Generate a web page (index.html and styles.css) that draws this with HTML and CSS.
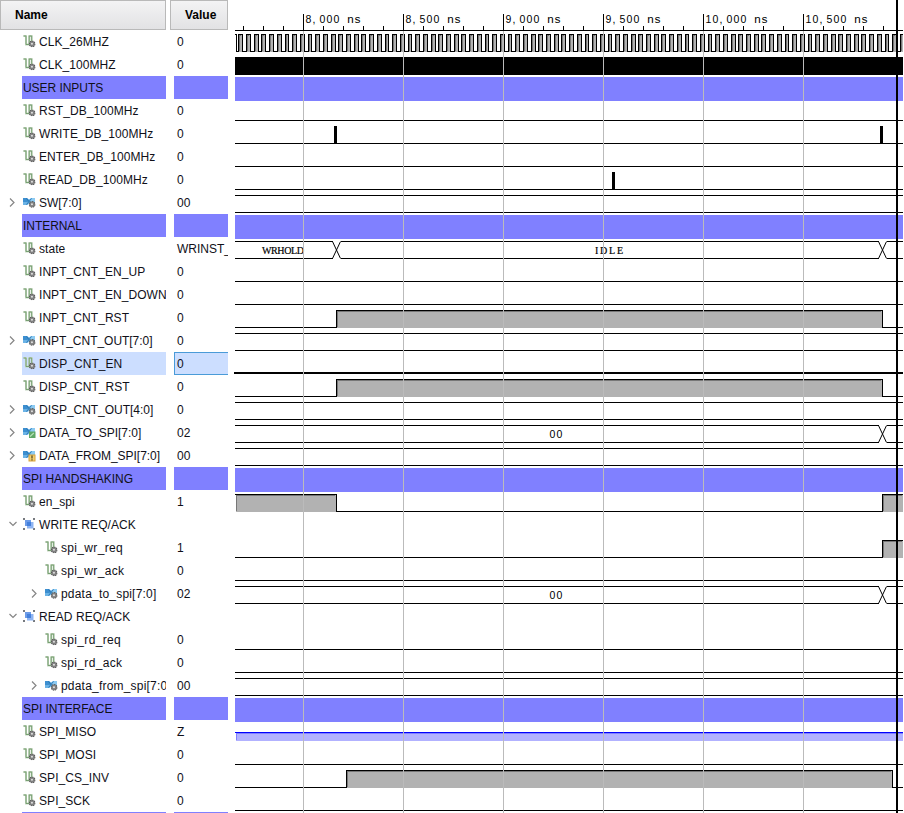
FILE: index.html
```html
<!DOCTYPE html>
<html lang="en">
<head>
<meta charset="utf-8">
<title>Waveform</title>
<link rel="stylesheet" href="styles.css">
</head>
<body>
<svg class="defs" aria-hidden="true">
  <symbol id="i-gear" viewBox="0 0 6 6">
    <circle cx="3" cy="3" r="2.5" fill="#8a8a8a" stroke="#5a5a5a" stroke-width="1" stroke-dasharray="1.200 .7"/>
    <circle cx="3" cy="3" r="2" fill="#808080"/>
    <circle cx="2.8" cy="2.8" r=".9" fill="#e0e0e0"/>
  </symbol>
  <symbol id="i-signal" viewBox="0 0 13 13">
    <path d="M0.500 1H3V9.500H6.200V1H8.700V7" fill="none" stroke="#c3d5bf" stroke-width="1.900"/>
    <path d="M0.500 1H3V9.500H6.200V1H8.700V7" fill="none" stroke="#6f9b6a" stroke-width=".9"/>
    <use href="#i-gear" x="5.800" y="5.500" width="6.800" height="6.800"/>
  </symbol>
  <symbol id="i-wires" viewBox="0 0 13 13">
    <path d="M0 2H4L6 3.500L8 2H12V9H7.500L6 7.800L4.500 9H0Z" fill="#6bb3e6"/>
    <path d="M0 2H4L6 4.500L4.500 6H0Z" fill="#3d8fd0"/>
    <path d="M12 2H9L6.500 4.500L8 6H12Z" fill="#8ccaf2"/>
    <path d="M3.500 2.500L8.500 8.500M3.500 8.500L8.500 2.500" fill="none" stroke="#2672ae" stroke-width=".9"/>
  </symbol>
  <symbol id="i-bus" viewBox="0 0 13 13">
    <use href="#i-wires" width="13" height="13"/>
    <use href="#i-gear" x="5.800" y="5" width="6.800" height="6.800"/>
  </symbol>
  <symbol id="i-out" viewBox="0 0 13 13">
    <use href="#i-wires" width="13" height="13"/>
    <path d="M6 5.500H12.500V12H6Z" fill="#5fa866"/>
    <path d="M7 10.500L10.800 7" stroke="#b6e2b9" stroke-width="1.200"/>
  </symbol>
  <symbol id="i-in" viewBox="0 0 13 13">
    <use href="#i-wires" width="13" height="13"/>
    <path d="M5.500 5.500H12.500V12.500H5.500Z" fill="#d9a33c"/>
    <path d="M6.500 6.500H11.500V11.500H6.500Z" fill="#f0cf72"/>
    <path d="M9 6.500V9.500M9 10.200V11.400" stroke="#5c4a20" stroke-width="1.300"/>
  </symbol>
  <symbol id="i-group" viewBox="0 0 13 13">
    <path d="M0 0H2V2H0ZM10 0H12V2H10ZM0 10H2V12H0ZM10 10H12V12H10Z" fill="#777a7f"/>
    <path d="M2 2H8V8H2Z" fill="#6d9ce8"/>
    <path d="M4 4H10.500V10.500H4Z" fill="#8fb4f2"/>
    <path d="M4 4H8V8H4Z" fill="#4480dc"/>
  </symbol>
</svg>
<main class="viewer">
  <section class="names">
    <header class="head head-name">Name</header>
    <div id="names"></div>
  </section>
  <section class="values">
    <header class="head head-value">Value</header>
    <div id="values"></div>
  </section>
  <section class="waves">
    <svg id="ruler" class="ruler" width="669" height="31"></svg>
    <div id="waves"></div>
    <svg id="overlay" class="overlay" width="669" height="813"></svg>
  </section>
</main>
<script src="app.js"></script>
</body>
</html>
```
FILE: styles.css
```css
* { box-sizing: border-box; }
body {
  margin: 0;
  background: #fff;
  color: #101018;
  font: 12px "Liberation Sans", Arial, sans-serif;
  overflow: hidden;
}
.defs { position: absolute; width: 0; height: 0; }
.viewer { display: flex; width: 904px; height: 813px; overflow: hidden; }
.names { width: 166px; margin-right: 4px; flex: none; }
.values { width: 58px; margin-right: 6px; flex: none; }
.waves { width: 669px; position: relative; flex: none; }
.head {
  height: 30px;
  border: 1px solid #b9b9b9;
  background: linear-gradient(#f3f3f4, #e2e2e4);
  font-weight: bold;
  line-height: 29px;
  color: #000;
}
.head-name { padding-left: 14px; }
.head-value { padding-left: 14px; }
.row { display: flex; align-items: center; height: 23px; white-space: nowrap; overflow: hidden; }
.row .arrow { width: 22px; height: 23px; flex: none; }
.row.nested .arrow { width: 44px; padding-left: 22px; }
.row .arrow svg { display: block; width: 22px; height: 23px; }
.label {
  display: flex;
  align-items: center;
  flex: 1;
  min-width: 0;
  height: 23px;
  padding-left: 1px;
  overflow: hidden;
}
.icon { width: 13px; height: 13px; margin-right: 3px; flex: none; }
.text { line-height: 23px; padding-top: 1px; letter-spacing: .06px; }
.group .text { letter-spacing: -.05px; }
.bus .text { letter-spacing: -.03px; }
.nested .text { letter-spacing: .33px; }
.nested.bus .text { letter-spacing: .2px; }
.group .label, .group .value { background: #8080ff; }
.value { height: 23px; flex: 1; margin-left: 4px; padding-left: 3px; line-height: 24px; overflow: hidden; }
.selected .label { background: #ccdeff; }
.selected .value {
  background: #ccdeff;
  border: 1px solid #4a9bd8;
  border-right: 0;
  padding-left: 2px;
  line-height: 22px;
}
.ruler { display: block; }
.wave { display: block; width: 669px; height: 23px; overflow: visible; }
.overlay { position: absolute; left: 0; top: 0; }
.digits { font-family: "Liberation Sans", sans-serif; font-size: 10.5px; fill: #000; }
.unit { font-family: "Liberation Mono", monospace; font-size: 11.67px; fill: #000; }
.state { font-family: "Liberation Serif", serif; font-size: 10px; fill: #000; stroke: #000; stroke-width: .2px; }
```
FILE: app.js
```js
// Horizontal positions are window x coordinates; the wave pane begins at x = 234.
const X0 = 234, END = 903;
const rows = [
  { n: 'CLK_26MHZ', v: '0', w: ['clock'] },
  { n: 'CLK_100MHZ', v: '0', w: ['solid'] },
  { n: 'USER INPUTS', g: 1 },
  { n: 'RST_DB_100MHz', v: '0', w: ['bit'] },
  { n: 'WRITE_DB_100MHz', v: '0', w: ['bit'], pulses: [334, 880] },
  { n: 'ENTER_DB_100MHz', v: '0', w: ['bit'] },
  { n: 'READ_DB_100MHz', v: '0', w: ['bit'], pulses: [612] },
  { n: 'SW[7:0]', v: '00', i: 'bus', w: ['bus'] },
  { n: 'INTERNAL', g: 1 },
  { n: 'state', v: 'WRINST_', w: ['bus', 336, 882], t: [[262, 'WRHOLD'], [595, 'IDLE']] },
  { n: 'INPT_CNT_EN_UP', v: '0', w: ['bit'] },
  { n: 'INPT_CNT_EN_DOWN', v: '0', w: ['bit'] },
  { n: 'INPT_CNT_RST', v: '0', w: ['bit', [336, 882]] },
  { n: 'INPT_CNT_OUT[7:0]', v: '0', i: 'bus', w: ['bus'] },
  { n: 'DISP_CNT_EN', v: '0', sel: 1, w: ['thick'] },
  { n: 'DISP_CNT_RST', v: '0', w: ['bit', [336, 882]] },
  { n: 'DISP_CNT_OUT[4:0]', v: '0', i: 'bus', w: ['bus'] },
  { n: 'DATA_TO_SPI[7:0]', v: '02', i: 'out', w: ['bus', 882], t: [[549, '00']] },
  { n: 'DATA_FROM_SPI[7:0]', v: '00', i: 'in', w: ['bus'] },
  { n: 'SPI HANDSHAKING', g: 1 },
  { n: 'en_spi', v: '1', w: ['bit', [235, 336], [882, END]] },
  { n: 'WRITE REQ/ACK', i: 'group', open: 1 },
  { n: 'spi_wr_req', v: '1', d: 1, w: ['bit', [882, END]] },
  { n: 'spi_wr_ack', v: '0', d: 1, w: ['bit'] },
  { n: 'pdata_to_spi[7:0]', v: '02', d: 1, i: 'bus', w: ['bus', 882], t: [[549, '00']] },
  { n: 'READ REQ/ACK', i: 'group', open: 1 },
  { n: 'spi_rd_req', v: '0', d: 1, w: ['bit'] },
  { n: 'spi_rd_ack', v: '0', d: 1, w: ['bit'] },
  { n: 'pdata_from_spi[7:0]', v: '00', d: 1, i: 'bus', w: ['bus'] },
  { n: 'SPI INTERFACE', g: 1 },
  { n: 'SPI_MISO', v: 'Z', w: ['float'] },
  { n: 'SPI_MOSI', v: '0', w: ['bit'] },
  { n: 'SPI_CS_INV', v: '0', w: ['bit', [346, 892]] },
  { n: 'SPI_SCK', v: '0', w: ['bit'] },
  { n: '', g: 1, last: 1 }
];

const rect = (x, y, w, h, c) =>
  w > 0 ? `<rect x="${x - X0}" y="${y}" width="${w}" height="${h}" fill="${c}"/>` : '';

// Text on a fixed pitch of 7px per character.
const pitched = (x, y, t, c) =>
  `<text class="${c}" x="${[...t].map((_, k) => x - X0 + k * 7).join(' ')}" y="${y}">${t}</text>`;

// High level between two edges: outline, inner shadow and fill.
function high(a, b) {
  const left = a === 235 ? 236 : a + 1;
  let s = rect(left, 4, b - left, 17, '#b2b2b2') + rect(left, 4, b - left - 1, 1, '#777') +
    rect(left, 4, 1, 16, '#777') + rect(a, 3, b - a + (b < END ? 1 : 0), 1, '#000');
  if (a !== 235) s += rect(a, 3, 1, 18, '#000');
  if (b < END) s += rect(b, 3, 1, 18, '#000');
  return s;
}

function bit(spans) {
  let s = '', x = 235;
  for (const [a, b] of spans) {
    s += rect(x, 20, a - x, 1, '#000') + high(a, b);
    x = b;
  }
  return s + rect(x, 20, END - x, 1, '#000');
}

function bus(changes) {
  let s = '', x = 235;
  for (const c of changes) {
    s += rect(x, 3, c - 3 - x, 1, '#000') + rect(x, 20, c - 3 - x, 1, '#000');
    const m = c - X0;
    s += `<path d="M${m - 3.5} 3.5L${m + 4.5} 20.5M${m + 4.5} 3.5L${m - 3.5} 20.5" stroke="#000"/>`;
    x = c + 5;
  }
  return s + rect(x, 3, END - x, 1, '#000') + rect(x, 20, END - x, 1, '#000');
}

function clock() {
  let s = rect(235, 3, 2, 1, '#000') + rect(236, 3, 1, 18, '#000') + rect(236, 20, 3, 1, '#000');
  const period = 100 / 13;
  for (let k = 0; k < 87; k++) {
    const a = Math.floor(238.9 + k * period);
    const b = Math.min(Math.floor(238.9 + (k + .5) * period), END);
    const next = Math.min(Math.floor(238.9 + (k + 1) * period), END);
    s += high(a, b) + rect(b, 20, next - b, 1, '#000');
  }
  return s;
}

function wave(r) {
  let s = '';
  if (r.last) return s;
  if (r.g) s = rect(235, 0, 668, 24, '#8080ff');
  else if (r.w) {
    const [kind, ...args] = r.w;
    if (kind === 'bit') s = bit(args);
    if (kind === 'bus') s = bus(args);
    if (kind === 'clock') s = clock();
    if (kind === 'solid') s = rect(235, 3, 668, 18, '#000');
    if (kind === 'thick') s = rect(234, 19, 669, 2, '#000');
    if (kind === 'float') s = rect(236, 12, 667, 8, '#b2b2ff') + rect(236, 12, 667, 1, '#8080ff') +
      rect(236, 12, 1, 7, '#8080ff') + rect(235, 11, 668, 1, '#00f');
  }
  for (const p of r.pulses || []) s += rect(p, 3, 3, 18, '#000');
  for (const [x, t] of r.t || []) {
    s += t === '00' ? pitched(x + .5, 16, t, 'digits')
      : `<text class="state" x="${x - X0}" y="16" textLength="${t.length * 7}">${t}</text>`;
  }
  return s;
}

function arrow(r) {
  const d = r.open ? 'M9.500 9L13 12.500L16.500 9' : 'M10 7.500L14 11.500L10 15.500';
  return r.open || ['bus', 'in', 'out'].includes(r.i)
    ? `<svg><path d="${d}" fill="none" stroke="#858585" stroke-width="1.200"/></svg>` : '';
}

const cls = r => 'row' + (r.g ? ' group' : '') + (r.sel ? ' selected' : '') + (r.d ? ' nested' : '') +
  (r.n.includes('[') ? ' bus' : '');

document.getElementById('names').innerHTML = rows.map(r =>
  `<div class="${cls(r)}"><span class="arrow">${arrow(r)}</span><span class="label">` +
  (r.g ? '' : `<svg class="icon"><use href="#i-${r.i || 'signal'}"/></svg>`) +
  `<span class="text">${r.n}</span></span></div>`).join('');
document.getElementById('values').innerHTML = rows.map(r =>
  `<div class="${cls(r)}"><span class="value">${r.v || ''}</span></div>`).join('');
document.getElementById('waves').innerHTML = rows.map(r => `<svg class="wave">${wave(r)}</svg>`).join('');

let ruler = rect(235, 30, 668, 1, '#000');
for (let x = 243; x <= END; x += 20) {
  const major = (x - 303) % 100 === 0;
  ruler += rect(x, major ? 14 : 26, 1, major ? 17 : 5, '#000');
}
['8,000', '8,500', '9,000', '9,500', '10,000', '10,500'].forEach((t, k) => {
  const x = 305.5 + k * 100;
  ruler += pitched(x, 23, t, 'digits') + pitched(x + (t.length + 1) * 7 - .5, 23, 'ns', 'unit');
});
document.getElementById('ruler').innerHTML = ruler;

let overlay = '';
for (let x = 303; x <= END; x += 100) overlay += rect(x, 31, 1, 782, '#bbb');
document.getElementById('overlay').innerHTML = overlay + rect(896, 0, 2, 813, '#000');
```
